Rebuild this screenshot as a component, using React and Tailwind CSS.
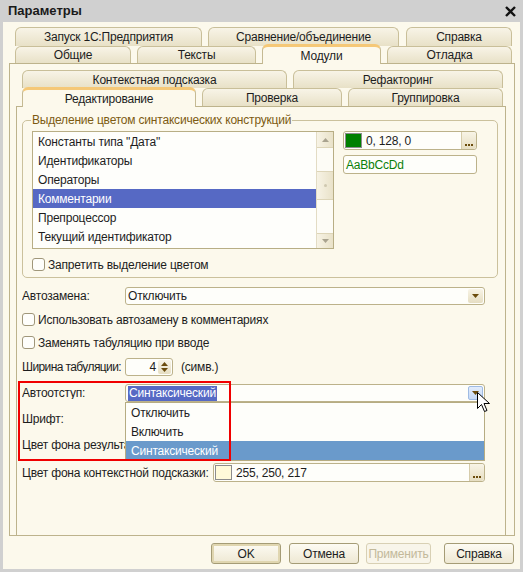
import React from "react";

const FONT = "font-['Liberation_Sans',Arial,sans-serif]";
const TXT = "text-[12px] leading-none tracking-[-0.2px] whitespace-nowrap";

const Tab = ({ label, w, active, h }) => (
  <div
    className={`${w} ${
      active
        ? "relative z-10 -mb-px h-[20px] border-x border-t-[3px] border-x-[#c5ba93] border-t-[#f5c877] bg-[#fcf9ec]"
        : `${h} border-x border-t border-[#c9bf99] bg-linear-to-b from-[#f8f4e7] to-[#e8e1c7]`
    } flex shrink-0 items-center justify-center rounded-t-[6px] ${TXT} text-[#1d1d1d]`}
  >
    {label}
  </div>
);

const Arrow = ({ up, color = "#6b4c0c" }) => (
  <svg width="7" height="4" viewBox="0 0 7 4">
    <path d={up ? "M0 4h7L3.5 0z" : "M0 0h7L3.5 4z"} fill={color} />
  </svg>
);

const Check = ({ label }) => (
  <div className="flex h-[13px] items-center">
    <span className="h-[13px] w-[13px] rounded-[3px] border border-[#a0977a] bg-[#fefefb]" />
    <span className={`ml-[3px] ${TXT}`}>{label}</span>
  </div>
);

const Label = ({ children, tight }) => (
  <span className={`w-[103px] shrink-0 overflow-hidden ${TXT} ${tight ? "tracking-[-0.6px]" : ""}`}>
    {children}
  </span>
);

const Combo = ({ children, hot }) => (
  <div className="flex h-[18px] w-[360px] items-center rounded-[3px] border border-[#bcb28a] bg-[#fefefa] pl-[2px]">
    <div className={`flex flex-1 items-center ${TXT}`}>{children}</div>
    <div
      className={`mr-px flex h-[14px] w-[15px] items-center justify-center rounded-[2px] ${
        hot
          ? "border border-[#9fbbe3] bg-linear-to-b from-[#e2ecfb] to-[#c6daf6]"
          : "bg-linear-to-b from-[#f8f4e6] to-[#e6dec2]"
      }`}
    >
      <Arrow />
    </div>
  </div>
);

const Dots = () => (
  <div className="flex h-full w-[15px] items-end justify-center rounded-r-[3px] border-l border-[#d6ccaa] bg-linear-to-b from-[#f8f4e6] to-[#e6dec2] pb-[3px]">
    <span className="flex gap-px">
      <span className="h-[2px] w-[2px] bg-[#6b4c0c]" />
      <span className="h-[2px] w-[2px] bg-[#6b4c0c]" />
      <span className="h-[2px] w-[2px] bg-[#6b4c0c]" />
    </span>
  </div>
);

const ColorField = ({ w, swatch, value }) => (
  <div className={`${w} flex h-[19px] items-center rounded-[3px] border border-[#bcb28a] bg-[#fefefa]`}>
    <span className={`ml-[1px] h-[15px] w-[17px] border border-[#8c8c8c] ${swatch}`} />
    <span className={`ml-[4px] flex-1 ${TXT}`}>{value}</span>
    <Dots />
  </div>
);

const items = [
  'Константы типа "Дата"',
  "Идентификаторы",
  "Операторы",
  "Комментарии",
  "Препроцессор",
  "Текущий идентификатор",
];

const Btn = ({ label, w, def, off }) => (
  <div
    className={`${w} flex h-[21px] items-center justify-center rounded-[3px] border ${TXT} ${
      off
        ? "border-[#d8d0b4] text-[#c3b99a] bg-[#f8f5ea]"
        : "border-[#a59c76] bg-linear-to-b from-[#fdfbf3] to-[#eee8d3] text-[#1d1d1d]"
    } ${def ? "shadow-[inset_0_0_0_2px_#e0d6b0]" : ""}`}
  >
    {label}
  </div>
);

export default function App() {
  return (
    <div className={`relative flex h-[572px] w-[523px] flex-col bg-[#d0d0d0] ${FONT} text-[#1d1d1d]`}>
      {/* title */}
      <div className="flex h-[22px] items-center justify-between pl-[8px] pr-[7px]">
        <span className="text-[13px] font-bold text-[#1a1a1a]">Параметры</span>
        <svg width="11" height="11" viewBox="0 0 11 11">
          <path d="M1 1L10 10M10 1L1 10" stroke="#111" strokeWidth="2.4" />
        </svg>
      </div>

      {/* body */}
      <div className="mx-[3px] flex h-[547px] flex-col bg-[#fcf9ec] pt-[5px]">
        <div className="flex h-[19px] items-start pl-[12px]">
          <Tab label="Запуск 1С:Предприятия" w="w-[187px]" h="h-[19px]" />
          <div className="ml-[6px]"><Tab label="Сравнение/объединение" w="w-[191px]" h="h-[19px]" /></div>
          <div className="ml-[7px]"><Tab label="Справка" w="w-[106px]" h="h-[19px]" /></div>
        </div>
        <div className="flex h-[17px] items-end gap-[6px] pl-[12px]">
          <Tab label="Общие" w="w-[116px]" h="h-[17px]" />
          <Tab label="Тексты" w="w-[119px]" h="h-[17px]" />
          <Tab label="Модули" w="w-[119px]" active />
          <Tab label="Отладка" w="w-[125px]" h="h-[17px]" />
        </div>

        {/* outer panel */}
        <div className="ml-[6px] flex h-[473px] w-[506px] flex-col border border-[#bdb38c] pt-[6px]">
          <div className="flex h-[18px] items-end gap-[6px] pl-[12px]">
            <Tab label="Контекстная подсказка" w="w-[265px]" h="h-[18px]" />
            <Tab label="Рефакторинг" w="w-[210px]" h="h-[18px]" />
          </div>
          <div className="flex h-[18px] items-end gap-[6px] pl-[12px]">
            <Tab label="Редактирование" w="w-[174px]" active />
            <Tab label="Проверка" w="w-[140px]" h="h-[18px]" />
            <Tab label="Группировка" w="w-[155px]" h="h-[18px]" />
          </div>

          {/* inner panel */}
          <div className="ml-[6px] flex w-[490px] flex-1 flex-col border border-b-0 border-[#bdb38c] pl-[5px]">
            <fieldset className="mt-[6px] w-[476px] rounded-[5px] border border-[#cbc19c] px-[9px] pb-[6px]">
              <legend className="-ml-[1px] px-[1px] text-[12px] leading-[15px] tracking-[-0.2px] text-[#7d5b12]">
                Выделение цветом синтаксических конструкций
              </legend>
              <div className="mt-[3px] flex items-start">
                <div className="flex h-[118px] w-[302px] border border-[#b8ae85] bg-[#fefefb]">
                  <div className="flex flex-1 flex-col">
                    {items.map((t, i) => (
                      <div
                        key={t}
                        className={`flex h-[19px] items-center pl-[5px] ${TXT} ${
                          i === 3 ? "bg-[#5669c4] text-white" : ""
                        }`}
                      >
                        {t}
                      </div>
                    ))}
                  </div>
                  <div className="flex w-[17px] flex-col border-l border-[#e3dcc4] bg-[#fdfcf6]">
                    <div className="flex h-[16px] items-center justify-center border-b border-[#ddd5b8] bg-linear-to-r from-[#f7f3e5] to-[#e9e2c9]">
                      <Arrow up color="#a9a38f" />
                    </div>
                    <div className="h-[23px]" />
                    <div className="flex h-[29px] items-center justify-center border-y border-[#ddd5b8] bg-linear-to-r from-[#f7f3e5] to-[#e9e2c9]">
                      <span className="h-[3px] w-[3px] rounded-full bg-[#cfc8b0]" />
                    </div>
                    <div className="flex-1" />
                    <div className="flex h-[15px] items-center justify-center border-t border-[#ddd5b8] bg-linear-to-r from-[#f7f3e5] to-[#e9e2c9]">
                      <Arrow color="#a9a38f" />
                    </div>
                  </div>
                </div>
                <div className="ml-[9px] flex flex-col">
                  <ColorField w="w-[134px]" swatch="bg-[#008000]" value="0, 128, 0" />
                  <div className={`mt-[5px] flex h-[19px] w-[134px] items-center rounded-[3px] border border-[#bcb28a] bg-[#fefefa] pl-[2px] ${TXT} text-[#0a800a]`}>
                    AaBbCcDd
                  </div>
                </div>
              </div>
              <div className="mt-[9px]">
                <Check label="Запретить выделение цветом" />
              </div>
            </fieldset>

            <div className="mt-[9px] flex items-center">
              <Label>Автозамена:</Label>
              <Combo>Отключить</Combo>
            </div>
            <div className="mt-[8px]">
              <Check label="Использовать автозамену в комментариях" />
            </div>
            <div className="mt-[10px]">
              <Check label="Заменять табуляцию при вводе" />
            </div>
            <div className="mt-[9px] flex items-center">
              <Label tight>Ширина табуляции:</Label>
              <div className="flex h-[18px] w-[48px] items-center rounded-[3px] border border-[#bcb28a] bg-[#fefefa]">
                <span className={`flex-1 pr-[2px] text-right ${TXT}`}>4</span>
                <div className="mr-px flex h-[14px] w-[13px] flex-col items-center justify-center gap-[2px] rounded-[2px] bg-linear-to-b from-[#f8f4e6] to-[#e6dec2]">
                  <Arrow up />
                  <Arrow />
                </div>
              </div>
              <span className={`ml-[8px] ${TXT}`}>(симв.)</span>
            </div>
            <div className="mt-[8px] flex items-center">
              <Label>Автоотступ:</Label>
              <Combo hot>
                <span className="flex h-[15px] items-center bg-[#5669c4] px-px text-white">Синтаксический</span>
              </Combo>
            </div>
            <div className="mt-[8px] flex h-[18px] items-center">
              <Label>Шрифт:</Label>
              <div className="ml-[88px] h-[18px] w-[272px] rounded-[3px] border border-[#bcb28a] bg-[#fefefa]" />
            </div>
            <div className="mt-[8px] flex h-[18px] items-center">
              <Label>Цвет фона результата поиска:</Label>
              <div className="ml-[88px] h-[18px] w-[272px] rounded-[3px] border border-[#bcb28a] bg-[#fefefa]" />
            </div>
            <div className="mt-[9px] flex items-center">
              <span className={`w-[191px] ${TXT}`}>Цвет фона контекстной подсказки:</span>
              <ColorField w="w-[272px]" swatch="bg-[#fffad9]" value="255, 250, 217" />
            </div>
          </div>
        </div>

        <div className="mt-[7px] flex h-[21px] justify-end pr-[6px]">
          <Btn label="OK" w="w-[70px]" def />
          <div className="ml-[8px]"><Btn label="Отмена" w="w-[70px]" /></div>
          <div className="ml-[7px]"><Btn label="Применить" w="w-[65px]" off /></div>
          <div className="ml-[13px]"><Btn label="Справка" w="w-[70px]" /></div>
        </div>
      </div>

      {/* open dropdown list */}
      <div className="absolute left-[125px] top-[402px] z-20 flex w-[360px] flex-col border border-[#b6ac82] bg-[#fefefa]">
        <div className={`flex h-[19px] items-center pl-[5px] ${TXT}`}>Отключить</div>
        <div className={`flex h-[19px] items-center pl-[5px] ${TXT}`}>Включить</div>
        <div className={`flex h-[19px] items-center bg-[#6a9acb] pl-[5px] ${TXT} text-white`}>Синтаксический</div>
      </div>

      {/* red highlight frame */}
      <div className="absolute left-[18px] top-[381px] z-30 h-[80px] w-[213px] border-2 border-[#f00000]" />

      {/* mouse cursor */}
      <svg className="absolute left-[477px] top-[392px] z-40" width="13" height="21" viewBox="0 0 13 21">
        <path d="M0.5 0.5V16.5L4.5 12.5L7.5 19.5L10 18.5L7 11.5H12.5Z" fill="#fff" stroke="#000" strokeWidth="1" />
      </svg>
    </div>
  );
}
